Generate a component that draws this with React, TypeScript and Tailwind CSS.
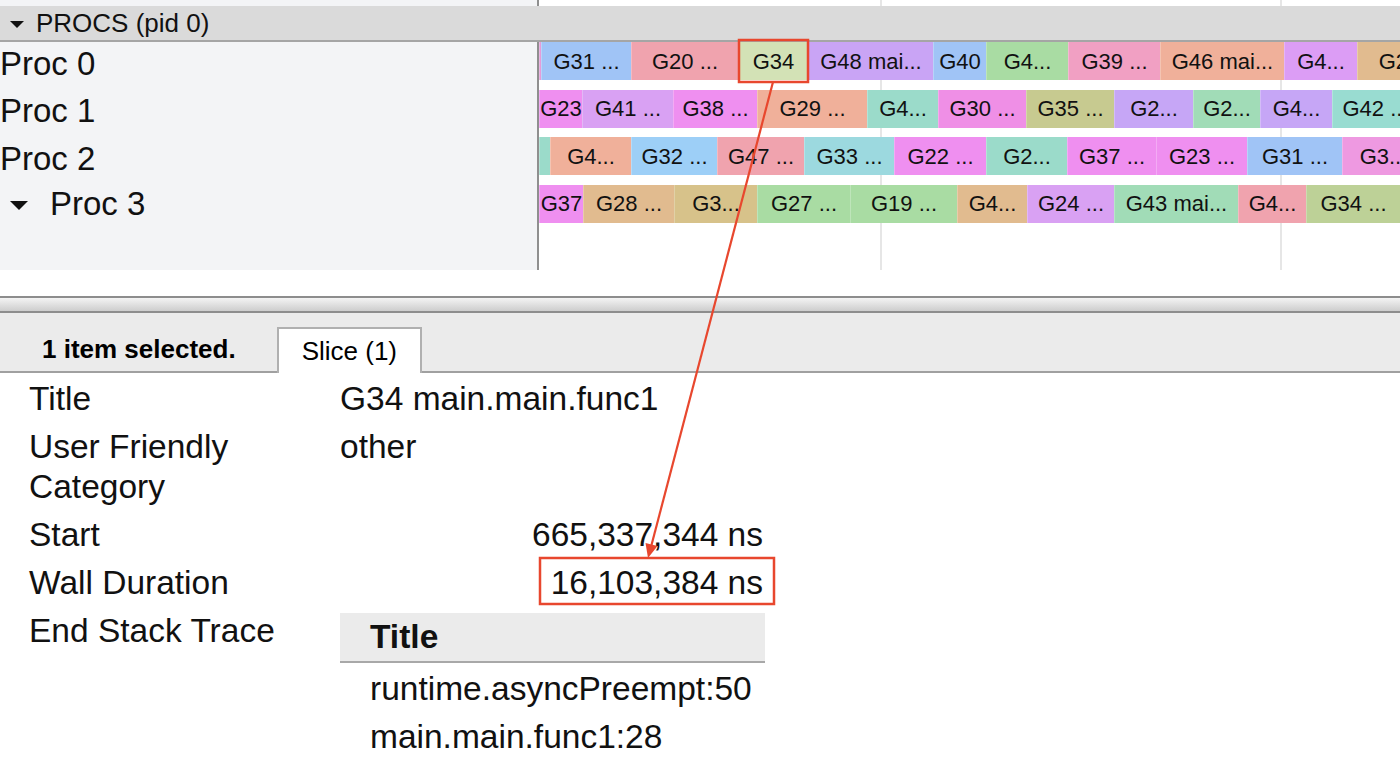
type Slice = [number, string, string];

const BLUE = "#a0c4f6";
const PINK = "#f0a3ae";
const SEL = "#d3e2b6";
const PURPLE = "#c9a4f5";
const GREEN = "#a9dca3";
const PINK2 = "#f1a0c3";
const SALMON = "#f0b09a";
const VIOLET = "#dc9df5";
const TAN = "#e1bb8f";
const MAGENTA = "#ef8ff0";
const LILAC = "#d9a1f3";
const TEAL = "#9bdbca";
const OLIVE = "#c7ca90";
const LAVENDER = "#c6a6f6";
const MINT = "#a1dcb7";
const CYAN = "#9cd9df";
const SKY = "#9dcff7";
const KHAKI = "#d7c28a";
const SAGE = "#bdd197";
const ORCHID = "#ee99e1";

// [start x, label, colour]; end is the right edge of the last slice
const rows: { slices: Slice[]; end: number }[] = [
  {
    slices: [
      [539, "", "#e59bd8"],
      [541, "G31 ...", BLUE],
      [631, "G20 ...", PINK],
      [738, "G34", SEL],
      [808, "G48 mai...", PURPLE],
      [933, "G40", BLUE],
      [986, "G4...", GREEN],
      [1068, "G39 ...", PINK2],
      [1160, "G46 mai...", SALMON],
      [1284, "G4...", VIOLET],
      [1357, "G2...", TAN],
    ],
    end: 1447,
  },
  {
    slices: [
      [539, "G23", MAGENTA],
      [582, "G41 ...", LILAC],
      [673, "G38 ...", MAGENTA],
      [757, "G29 ...", SALMON],
      [867, "G4...", TEAL],
      [938, "G30 ...", "#ef8fe6"],
      [1026, "G35 ...", OLIVE],
      [1114, "G2...", LAVENDER],
      [1193, "G2...", MINT],
      [1260, "G4...", LAVENDER],
      [1332, "G42 ...", "#99dcd1"],
    ],
    end: 1418,
  },
  {
    slices: [
      [539, "", TEAL],
      [550, "G4...", SALMON],
      [631, "G32 ...", SKY],
      [717, "G47 ...", PINK],
      [804, "G33 ...", CYAN],
      [894, "G22 ...", MAGENTA],
      [986, "G2...", TEAL],
      [1067, "G37 ...", MAGENTA],
      [1156, "G23 ...", MAGENTA],
      [1247, "G31 ...", BLUE],
      [1342, "G3...", ORCHID],
    ],
    end: 1424,
  },
  {
    slices: [
      [539, "G37", MAGENTA],
      [583, "G28 ...", TAN],
      [674, "G3...", KHAKI],
      [757, "G27 ...", GREEN],
      [850, "G19 ...", GREEN],
      [957, "G4...", TAN],
      [1027, "G24 ...", LILAC],
      [1114, "G43 mai...", MINT],
      [1238, "G4...", PINK],
      [1306, "G34 ...", SAGE],
    ],
    end: 1400,
  },
];

const labels = ["Proc 0", "Proc 1", "Proc 2", "Proc 3"];

const GridLines = () => (
  <>
    <div className="absolute top-0 bottom-0 left-[341px] w-[2px] bg-[#e6e6e6]" />
    <div className="absolute top-0 bottom-0 left-[741px] w-[2px] bg-[#e6e6e6]" />
  </>
);

const TrackRow = ({ slices, end }: { slices: Slice[]; end: number }) => (
  <div className="flex h-[38px] overflow-hidden relative">
    {slices.map(([x, t, c], i) => {
      const next = i + 1 < slices.length ? slices[i + 1][0] : end;
      return (
        <div
          key={i}
          className="shrink-0 h-full flex items-center justify-center whitespace-nowrap text-[22px] text-[#111] border-l border-white/25"
          style={{ width: next - x, backgroundColor: c }}
        >
          {t}
        </div>
      );
    })}
  </div>
);

const DetailRow = ({ label, children }: { label: React.ReactNode; children?: React.ReactNode }) => (
  <div className="flex py-[4px] leading-[40px]">
    <div className="w-[340px] pl-[29px] shrink-0">{label}</div>
    <div className="w-[425px]">{children}</div>
  </div>
);

export default function App() {
  return (
    <div className="relative w-[1400px] h-[763px] overflow-hidden bg-white text-black font-['Liberation_Sans',Arial,sans-serif]">
      {/* top strip (end of previous track) */}
      <div className="flex h-[6px]">
        <div className="w-[539px] bg-[#f3f4f6] border-r-2 border-[#8f8f8f]" />
        <div className="flex-1 relative">
          <GridLines />
        </div>
      </div>

      {/* process header */}
      <div className="h-[36px] bg-[#dadada] border-b-2 border-[#a5a5a5] flex items-center">
        <svg width="14" height="7" viewBox="0 0 14 7" className="ml-[10px] mt-[2px]">
          <path d="M0 0 L14 0 L7 7 Z" fill="#111" />
        </svg>
        <span className="ml-[12px] text-[26px] leading-none text-[#111]">PROCS (pid 0)</span>
      </div>

      {/* tracks */}
      <div className="flex h-[228px]">
        <div className="w-[539px] shrink-0 bg-[#f3f4f6] border-r-2 border-[#8f8f8f] flex flex-col gap-[9.67px]">
          {labels.map((l, i) => (
            <div key={l} className="h-[38px] flex items-center text-[33px] text-[#111] leading-none">
              {i === 3 ? (
                <>
                  <svg width="18" height="9" viewBox="0 0 18 9" className="ml-[10px] mt-[4px]">
                    <path d="M0 0 L18 0 L9 9 Z" fill="#111" />
                  </svg>
                  <span className="ml-[22px]">{l}</span>
                </>
              ) : (
                <span className="mt-[4px]">{l}</span>
              )}
            </div>
          ))}
        </div>
        <div className="flex-1 relative overflow-hidden">
          <GridLines />
          <div className="relative flex flex-col gap-[9.67px]">
            {rows.map((r, i) => (
              <TrackRow key={i} slices={r.slices} end={r.end} />
            ))}
          </div>
        </div>
      </div>

      <div className="h-[26px]" />

      {/* splitter */}
      <div className="border-t-2 border-b-2 border-[#8d8d8d] h-[17px] bg-gradient-to-b from-[#f4f4f4] to-[#cdcdcd]" />

      {/* analysis tabs */}
      <div className="h-[60px] bg-[#ebebeb] border-b-2 border-[#a0a0a0] flex items-end pl-[42px]">
        <div className="h-[44px] flex items-center text-[26px] font-bold">1 item selected.</div>
        <div className="ml-[41px] h-[46px] -mb-[2px] px-[23px] bg-white border-2 border-b-0 border-[#b0b0b0] flex items-center text-[26px]">
          Slice (1)
        </div>
      </div>

      {/* details */}
      <div className="pt-[2px] text-[33.5px] text-[#111]">
        <DetailRow label="Title">G34 main.main.func1</DetailRow>
        <DetailRow
          label={
            <>
              User Friendly
              <br />
              Category
            </>
          }
        >
          other
        </DetailRow>
        <DetailRow label="Start">
          <div className="text-right pr-[2px]">665,337,344 ns</div>
        </DetailRow>
        <DetailRow label="Wall Duration">
          <div className="text-right pr-[2px]">16,103,384 ns</div>
        </DetailRow>
        <DetailRow label="End Stack Trace">
          <div className="mt-[2px]">
            <div className="h-[50px] bg-[#ebebeb] border-b-2 border-[#a8a8a8] flex items-center pl-[30px] font-bold">
              Title
            </div>
            <div className="pt-[2px] pl-[30px]">
              <div className="h-[48px] flex items-center">runtime.asyncPreempt:50</div>
              <div className="h-[48px] flex items-center">main.main.func1:28</div>
            </div>
          </div>
        </DetailRow>
      </div>

      {/* annotation overlay */}
      <svg
        className="absolute inset-0 pointer-events-none"
        width="1400"
        height="763"
        viewBox="0 0 1400 763"
      >
        <rect x="739" y="40" width="69" height="42" fill="none" stroke="#e8472e" strokeWidth="2.5" />
        <rect x="540" y="558" width="234" height="46" fill="none" stroke="#e8472e" strokeWidth="2.5" />
        <line x1="773" y1="82" x2="651.5" y2="545" stroke="#e8472e" strokeWidth="2.2" />
        <polygon points="648,558 657.5,546 645.5,543" fill="#e8472e" />
      </svg>
    </div>
  );
}
